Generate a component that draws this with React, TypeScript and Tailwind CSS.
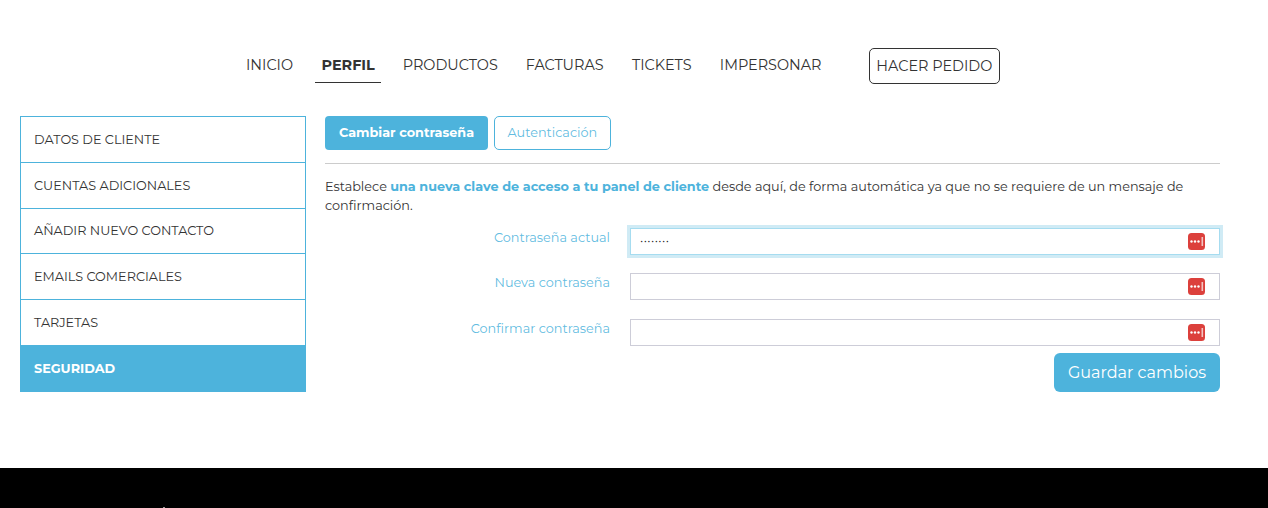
import React from "react";

const side = ["DATOS DE CLIENTE", "CUENTAS ADICIONALES", "AÑADIR NUEVO CONTACTO", "EMAILS COMERCIALES", "TARJETAS"];

function Key() {
  return (
    <svg width="17" height="17" viewBox="0 0 17 17" className="shrink-0">
      <rect x="0" y="0" width="17" height="17" rx="3.5" fill="#dc403c" />
      <circle cx="3.5" cy="8.5" r="1.2" fill="#fff" />
      <circle cx="7" cy="8.5" r="1.2" fill="#fff" />
      <circle cx="10.5" cy="8.5" r="1.2" fill="#fff" />
      <rect x="13.5" y="4" width="1.6" height="9" fill="#f3c4c2" />
    </svg>
  );
}

function Field({ label, value, focus, mt }: { label: string; value?: string; focus?: boolean; mt: string }) {
  return (
    <div className={`flex ${mt}`}>
      <label className="w-[285px] text-right text-[12.8px] leading-[19px] text-[#4db3dc]/90">{label}</label>
      <div className={`ml-[20px] w-[590px] h-[27px] flex items-center justify-between pl-[9px] pr-[14px] bg-white border ${focus ? "border-[#a6dcf0] shadow-[0_0_0_3px_#d0ebf5]" : "border-[#cdcdd8]"}`}>
        <span className="text-[12.8px] text-[#222] leading-none tracking-[0.45px]">{value}</span>
        <Key />
      </div>
    </div>
  );
}

export default function App() {
  return (
    <div className="w-[1268px] h-[508px] overflow-hidden bg-white flex flex-col font-['Montserrat','Inter','Noto_Sans',sans-serif] text-[#333]">
      <div className="h-[116px] pt-[48px] flex items-start text-[14.4px]">
        <span className="ml-[246px] leading-[34px]">INICIO</span>
        <span className="ml-[21.5px] pl-[7px] pr-[6px] h-[35px] leading-[34px] font-bold border-b border-[#333]">PERFIL</span>
        <span className="ml-[22px] leading-[34px]">PRODUCTOS</span>
        <span className="ml-[28px] leading-[34px]">FACTURAS</span>
        <span className="ml-[28.3px] leading-[34px]">TICKETS</span>
        <span className="ml-[28.3px] leading-[34px]">IMPERSONAR</span>
        <span className="ml-[47.2px] h-[36px] leading-[34px] px-[6.7px] border border-[#333] rounded-[5px]">HACER PEDIDO</span>
      </div>
      <div className="flex h-[352px] items-start">
        <div className="ml-[20px] w-[286px] border border-[#4db3dc] text-[12.8px]">
          {side.map((s, i) => (
            <div key={s} className={`${i ? "h-[45.7px] border-t border-[#4db3dc]" : "h-[45px]"} flex items-center pl-[13px]`}>{s}</div>
          ))}
          <div className="h-[46.5px] pt-[1px] flex items-center pl-[13px] bg-[#4db3dc] text-white font-bold">SEGURIDAD</div>
        </div>
        <div className="ml-[19px] w-[895px]">
          <div className="flex gap-[6px] text-[12.8px]">
            <span className="h-[34px] px-[14px] flex items-center rounded-[4px] bg-[#4db3dc] text-white font-bold">Cambiar contraseña</span>
            <span className="h-[34px] px-[12.5px] flex items-center rounded-[5px] border border-[#4db3dc] text-[#4db3dc]/90">Autenticación</span>
          </div>
          <div className="mt-[13px] border-t border-[#ccc]" />
          <p className="mt-[13px] text-[12.8px] leading-[19px]">
            Establece <b className="text-[#4db3dc]">una nueva clave de acceso a tu panel de cliente</b> desde aquí, de forma automática ya que no se requiere de un mensaje de confirmación.
          </p>
          <Field label="Contraseña actual" value="········" focus mt="mt-[13px]" />
          <Field label="Nueva contraseña" mt="mt-[18px]" />
          <Field label="Confirmar contraseña" mt="mt-[19px]" />
          <div className="mt-[7px] flex justify-end">
            <span className="h-[39px] px-[14px] flex items-center rounded-[6px] bg-[#4db3dc] text-white text-[16px]">Guardar cambios</span>
          </div>
        </div>
      </div>
      <div className="h-[40px] bg-black pt-[39px] pl-[163px]">
        <div className="w-[2px] h-[1px] bg-[#999]" />
      </div>
    </div>
  );
}
